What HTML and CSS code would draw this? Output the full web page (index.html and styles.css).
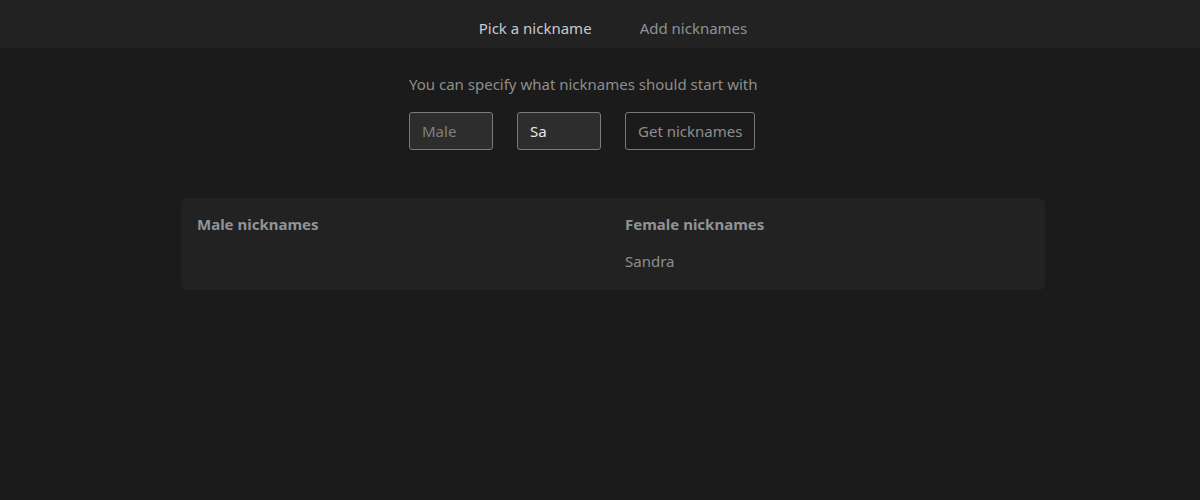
FILE: index.html
```html
<!DOCTYPE html>
<html lang="en">
<head>
<meta charset="utf-8">
<title>Nicknames</title>
<link rel="stylesheet" href="styles.css">
</head>
<body>
<header class="topbar">
  <nav class="tabs">
    <a class="tab tab-active">Pick a nickname</a>
    <a class="tab">Add nicknames</a>
  </nav>
</header>
<main class="main">
  <div class="query">
    <p class="hint">You can specify what nicknames should start with</p>
    <div class="controls">
      <input class="field" type="text" placeholder="Male">
      <input class="field field-filled" type="text" value="Sa">
      <button class="btn" type="button">Get nicknames</button>
    </div>
  </div>
  <section class="results">
    <div class="col">
      <h3 class="col-title">Male nicknames</h3>
    </div>
    <div class="col">
      <h3 class="col-title">Female nicknames</h3>
      <ul class="names"><li>Sandra</li></ul>
    </div>
  </section>
</main>
</body>
</html>
```
FILE: styles.css
```css
* { box-sizing: border-box; }
html, body { margin: 0; padding: 0; }
body {
  background: #1b1b1b;
  font-family: "Noto Sans", "Open Sans", sans-serif;
  font-size: 15px;
  color: #9a9a9a;
  height: 500px;
}
.topbar {
  height: 48px;
  background: #222222;
  display: flex;
  justify-content: center;
  align-items: flex-end;
  padding-left: 26px;
  padding-bottom: 8px;
}
.tabs { display: flex; gap: 48px; }
.tab {
  color: #8f9296;
  font-size: 15px;
  line-height: 24px;
  text-decoration: none;
}
.tab-active { color: #c6cbd0; }
.main {
  display: flex;
  flex-direction: column;
  align-items: center;
  padding-top: 24px;
  padding-left: 26px;
}
.query {
  width: 408px;
}
.hint {
  margin: 0;
  line-height: 24px;
  color: #8e8e8e;
}
.controls {
  display: flex;
  gap: 24px;
  margin-top: 16px;
}
.field {
  width: 84px;
  height: 38px;
  background: #2d2d2d;
  border: 1px solid #7a7a7a;
  border-radius: 3px;
  padding: 0 12px;
  font: inherit;
  color: #e6e6e6;
  outline: none;
}
.field::placeholder { color: #808080; }
.btn {
  height: 38px;
  padding: 0 12px;
  background: transparent;
  border: 1px solid #7a7a7a;
  border-radius: 3px;
  font: inherit;
  color: #8e8e8e;
}
.results {
  margin-top: 48px;
  width: 864px;
  background: #222222;
  border-radius: 6px;
  padding: 14px 16px 17px;
  display: grid;
  grid-template-columns: 1fr 1fr;
  column-gap: 24px;
}
.col-title {
  margin: 0;
  font-size: 15px;
  font-weight: 700;
  line-height: 24px;
  color: #8f9499;
}
.names {
  list-style: none;
  margin: 13px 0 0;
  padding: 0;
  line-height: 24px;
  color: #8e8e8e;
}
```
